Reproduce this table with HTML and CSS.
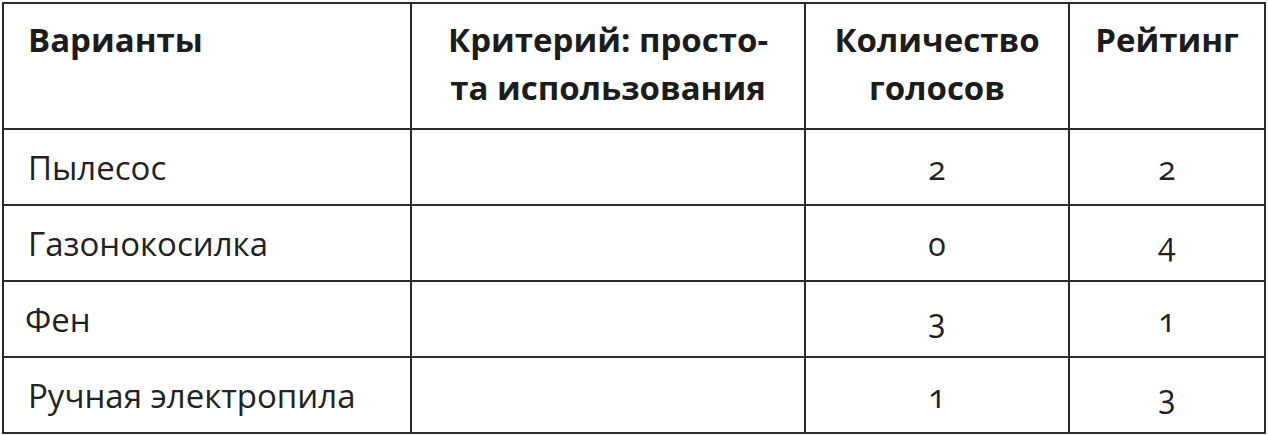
FILE: index.html
```html
<!DOCTYPE html>
<html lang="ru">
<head>
<meta charset="utf-8">
<title>Варианты</title>
<link rel="stylesheet" href="styles.css">
</head>
<body>
<div class="table">
  <div class="cell head left">Варианты</div>
  <div class="cell head">Критерий: просто-<br>та использования</div>
  <div class="cell head">Количество<br>голосов</div>
  <div class="cell head">Рейтинг</div>

  <div class="cell left">Пылесос</div>
  <div class="cell"></div>
  <div class="cell num">2</div>
  <div class="cell num">2</div>

  <div class="cell left">Газонокосилка</div>
  <div class="cell"></div>
  <div class="cell num">0</div>
  <div class="cell num">4</div>

  <div class="cell left tight">Фен</div>
  <div class="cell"></div>
  <div class="cell num">3</div>
  <div class="cell num">1</div>

  <div class="cell left">Ручная электропила</div>
  <div class="cell"></div>
  <div class="cell num">1</div>
  <div class="cell num">3</div>
</div>
</body>
</html>
```

FILE: styles.css
```css
html, body {
  margin: 0;
  padding: 0;
  background: #ffffff;
}

body {
  padding: 2px 0 0 2px;
  font-family: "Open Sans", "Noto Sans", "Liberation Sans", sans-serif;
  color: #222222;
}

.table {
  display: grid;
  width: 1264px;
  box-sizing: border-box;
  grid-template-columns: 406px 392px 262px 194px;
  grid-template-rows: 124px 74px 74px 74px 74px;
  gap: 2px;
  padding: 2px;
  background: #2b2b2b;
}

.cell {
  background: #ffffff;
  display: flex;
  align-items: center;
  justify-content: center;
  font-size: 33px;
  font-weight: 400;
  font-variant-numeric: oldstyle-nums;
  letter-spacing: 0;
}

.cell.left {
  justify-content: flex-start;
  padding-left: 24px;
}

.cell.tight {
  padding-left: 21px;
}

.cell.head {
  align-items: flex-start;
  text-align: center;
  font-size: 33px;
  font-weight: 700;
  line-height: 48px;
  padding-top: 12px;
  color: #1c1c1c;
  letter-spacing: 0;
}

.cell.head.left {
  text-align: left;
}

.cell.num {
  font-size: 32px;
}
```
